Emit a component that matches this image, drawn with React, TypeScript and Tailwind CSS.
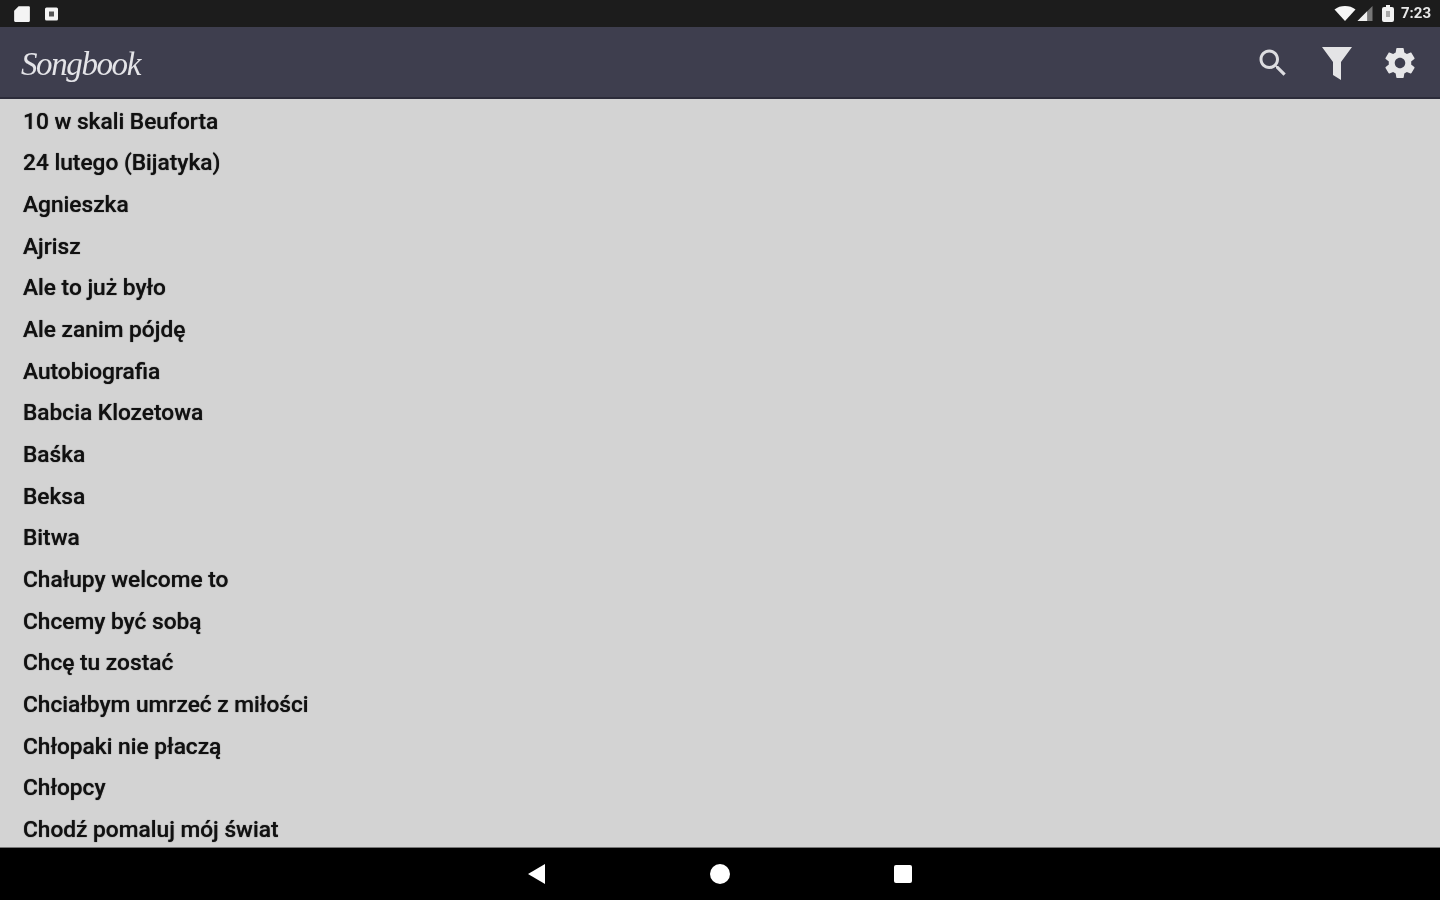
import React from "react";

const songs = [
  "10 w skali Beuforta",
  "24 lutego (Bijatyka)",
  "Agnieszka",
  "Ajrisz",
  "Ale to już było",
  "Ale zanim pójdę",
  "Autobiografia",
  "Babcia Klozetowa",
  "Baśka",
  "Beksa",
  "Bitwa",
  "Chałupy welcome to",
  "Chcemy być sobą",
  "Chcę tu zostać",
  "Chciałbym umrzeć z miłości",
  "Chłopaki nie płaczą",
  "Chłopcy",
  "Chodź pomaluj mój świat",
];

const StatusBar: React.FC = () => (
  <div className="flex h-[27px] shrink-0 items-center justify-between bg-[#1c1c1c] pl-[13px] pr-[9px]">
    <div className="flex items-center gap-[14px]">
      <svg width="18" height="18" viewBox="0 0 16 16" fill="#f4f4f4">
        <path d="M5 1h9a1 1 0 0 1 1 1v12a1 1 0 0 1-1 1H2a1 1 0 0 1-1-1V5z" />
      </svg>
      <svg width="13" height="14" viewBox="0 0 13 13">
        <rect width="13" height="13" rx="1.5" fill="#f4f4f4" />
        <rect x="4" y="4" width="5" height="5" fill="#555" />
      </svg>
    </div>
    <div className="flex items-center">
      <svg width="22" height="15" viewBox="0 0 21 15" fill="#f6f6f6">
        <path d="M0 3.5C3 1 6.500 0 10.500 0S18 1 21 3.500L10.500 15z" />
      </svg>
      <svg width="16" height="15" viewBox="0 0 14 14" className="ml-px">
        <path d="M14 0v14H0z" fill="#777" />
        <path d="M9 5v9H0z" fill="#f0f0f0" />
      </svg>
      <svg width="12" height="17" viewBox="0 0 12 17" className="ml-[9px]">
        <path d="M4 0h4v2h2a2 2 0 0 1 2 2v11a2 2 0 0 1-2 2H2a2 2 0 0 1-2-2V4a2 2 0 0 1 2-2h2z" fill="#f2f2f2" />
        <rect x="4" y="6" width="4" height="6" fill="#aaa" />
      </svg>
      <span className="ml-[7px] font-['Roboto',sans-serif] text-[15px] font-bold leading-none text-[#e8e8e8]">7:23</span>
    </div>
  </div>
);

const Header: React.FC = () => (
  <header className="flex h-[72px] shrink-0 items-center justify-between border-b-2 border-[#2c2c3a] bg-[#3e3e4e] pl-[21px] pr-[22px]">
    <span className="pt-[5px] font-['Liberation_Serif',serif] text-[33px] italic leading-none tracking-[-1.4px] text-[#e4e4e8]">
      Songbook
    </span>
    <div className="flex items-center pt-[2px]">
      <svg width="36" height="36" viewBox="0 0 24 24" fill="#dcdce0">
        <path d="M15.500 14h-.79l-.28-.27C15.410 12.590 16 11.110 16 9.500 16 5.910 13.090 3 9.500 3S3 5.910 3 9.500 5.910 16 9.500 16c1.610 0 3.090-.59 4.230-1.570l.27.28v.79l5 4.990L20.490 19l-4.990-5zm-6 0C7.010 14 5 11.990 5 9.500S7.010 5 9.500 5 14 7.010 14 9.500 11.990 14 9.500 14z" />
      </svg>
      <svg width="30" height="33" viewBox="0 0 30 33" fill="#e4e4e6" className="ml-[31px]">
        <path d="M0 0h30L19 15v18l-8-5V15z" />
      </svg>
      <svg width="36" height="36" viewBox="0 0 24 24" fill="#e6e6e8" className="ml-[30px]">
        <path d="M19.430 12.980c.04-.32.07-.64.07-.98s-.03-.66-.07-.98l2.110-1.650c.19-.15.24-.42.12-.64l-2-3.460c-.12-.22-.39-.3-.61-.22l-2.490 1c-.52-.4-1.080-.73-1.690-.98l-.38-2.650C14.460 2.180 14.250 2 14 2h-4c-.25 0-.46.18-.49.42l-.38 2.650c-.61.25-1.170.59-1.690.98l-2.490-1c-.23-.09-.49 0-.61.22l-2 3.460c-.13.22-.07.49.12.64l2.110 1.650c-.04.32-.07.65-.07.98s.03.66.07.98l-2.110 1.650c-.19.15-.24.42-.12.64l2 3.460c.12.22.39.3.61.22l2.490-1c.52.4 1.080.73 1.690.98l.38 2.650c.03.24.24.42.49.42h4c.25 0 .46-.18.49-.42l.38-2.650c.61-.25 1.170-.59 1.690-.98l2.490 1c.23.09.49 0 .61-.22l2-3.460c.12-.22.07-.49-.12-.64l-2.110-1.650zM12 15.500c-1.930 0-3.500-1.570-3.500-3.500s1.570-3.500 3.500-3.500 3.500 1.570 3.500 3.500-1.570 3.500-3.500 3.500z" />
      </svg>
    </div>
  </header>
);

const NavBar: React.FC = () => (
  <div className="flex h-[53px] shrink-0 items-center justify-center gap-[164px] border-t border-[#777] bg-black">
    <svg width="18" height="20" viewBox="0 0 18 20" fill="#fff">
      <path d="M0 10 17 0v20z" />
    </svg>
    <div className="h-[20px] w-[20px] rounded-full bg-white" />
    <div className="h-[18px] w-[18px] rounded-[2px] bg-white" />
  </div>
);

const App: React.FC = () => {
  return (
    <div className="flex h-[900px] w-[1440px] flex-col overflow-hidden bg-[#d3d3d3] blur-[0.6px]">
      <StatusBar />
      <Header />
      <ul className="flex-1 overflow-hidden pt-[2px] pl-[23px]">
        {songs.map((song) => (
          <li
            key={song}
            className="flex h-[41.67px] items-center font-['Roboto',sans-serif] text-[22.700px] font-medium text-[#111] [text-shadow:0_0_1px_#333]"
          >
            {song}
          </li>
        ))}
      </ul>
      <NavBar />
    </div>
  );
};

export default App;
